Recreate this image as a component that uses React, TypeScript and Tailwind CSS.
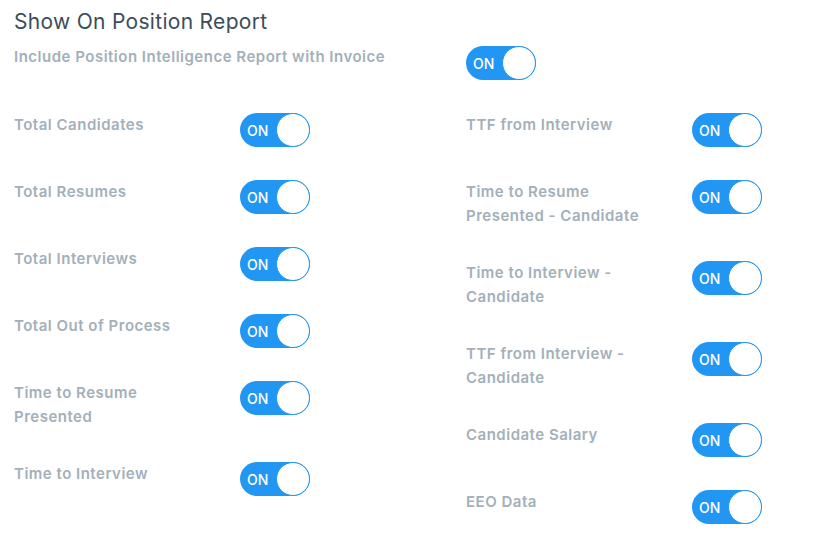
import React from 'react'

type Item = { lines: string[] }

const LEFT: Item[] = [
  { lines: ['Total Candidates'] },
  { lines: ['Total Resumes'] },
  { lines: ['Total Interviews'] },
  { lines: ['Total Out of Process'] },
  { lines: ['Time to Resume', 'Presented'] },
  { lines: ['Time to Interview'] }
]

const RIGHT: Item[] = [
  { lines: ['TTF from Interview'] },
  { lines: ['Time to Resume', 'Presented - Candidate'] },
  { lines: ['Time to Interview -', 'Candidate'] },
  { lines: ['TTF from Interview -', 'Candidate'] },
  { lines: ['Candidate Salary'] },
  { lines: ['EEO Data'] }
]

function Toggle() {
  return (
    <div className="relative h-[34px] w-[70px] shrink-0 rounded-full bg-[#2196f3]">
      <span className="absolute left-[7px] top-px text-[14px] font-medium leading-[34px] text-white">ON</span>
      <span className="absolute right-0 top-0 h-[34px] w-[34px] rounded-full border border-[#2196f3] bg-white" />
    </div>
  )
}

function Row({ item }: { item: Item }) {
  return (
    <div className="flex items-start">
      <div className="w-[226px] text-[15px] font-semibold leading-[24px] tracking-[0.5px] text-[#a3b0b9]">
        {item.lines.map((l, i) => (
          <div key={i}>{l}</div>
        ))}
      </div>
      <Toggle />
    </div>
  )
}

export default function App() {
  return (
    <div className="min-h-[550px] bg-white px-[14px] pt-[8px]" style={{ fontFamily: 'Inter, "Open Sans", sans-serif' }}>
      <h2 className="text-[21px] font-normal leading-[28px] tracking-[0.3px] text-[#3c4d5a]">Show On Position Report</h2>
      <div className="mt-[9px] grid grid-cols-[452px_1fr]">
        <div className="text-[15px] font-semibold leading-[24px] tracking-[0.5px] text-[#a3b0b9]">
          Include Position Intelligence Report with Invoice
        </div>
        <div className="mt-px">
          <Toggle />
        </div>
      </div>
      <div className="mt-[33px] grid grid-cols-[452px_1fr]">
        <div className="flex flex-col gap-[33px]">
          {LEFT.map((it, i) => (
            <Row key={i} item={it} />
          ))}
        </div>
        <div className="flex flex-col gap-[33px]">
          {RIGHT.map((it, i) => (
            <Row key={i} item={it} />
          ))}
        </div>
      </div>
    </div>
  )
}
